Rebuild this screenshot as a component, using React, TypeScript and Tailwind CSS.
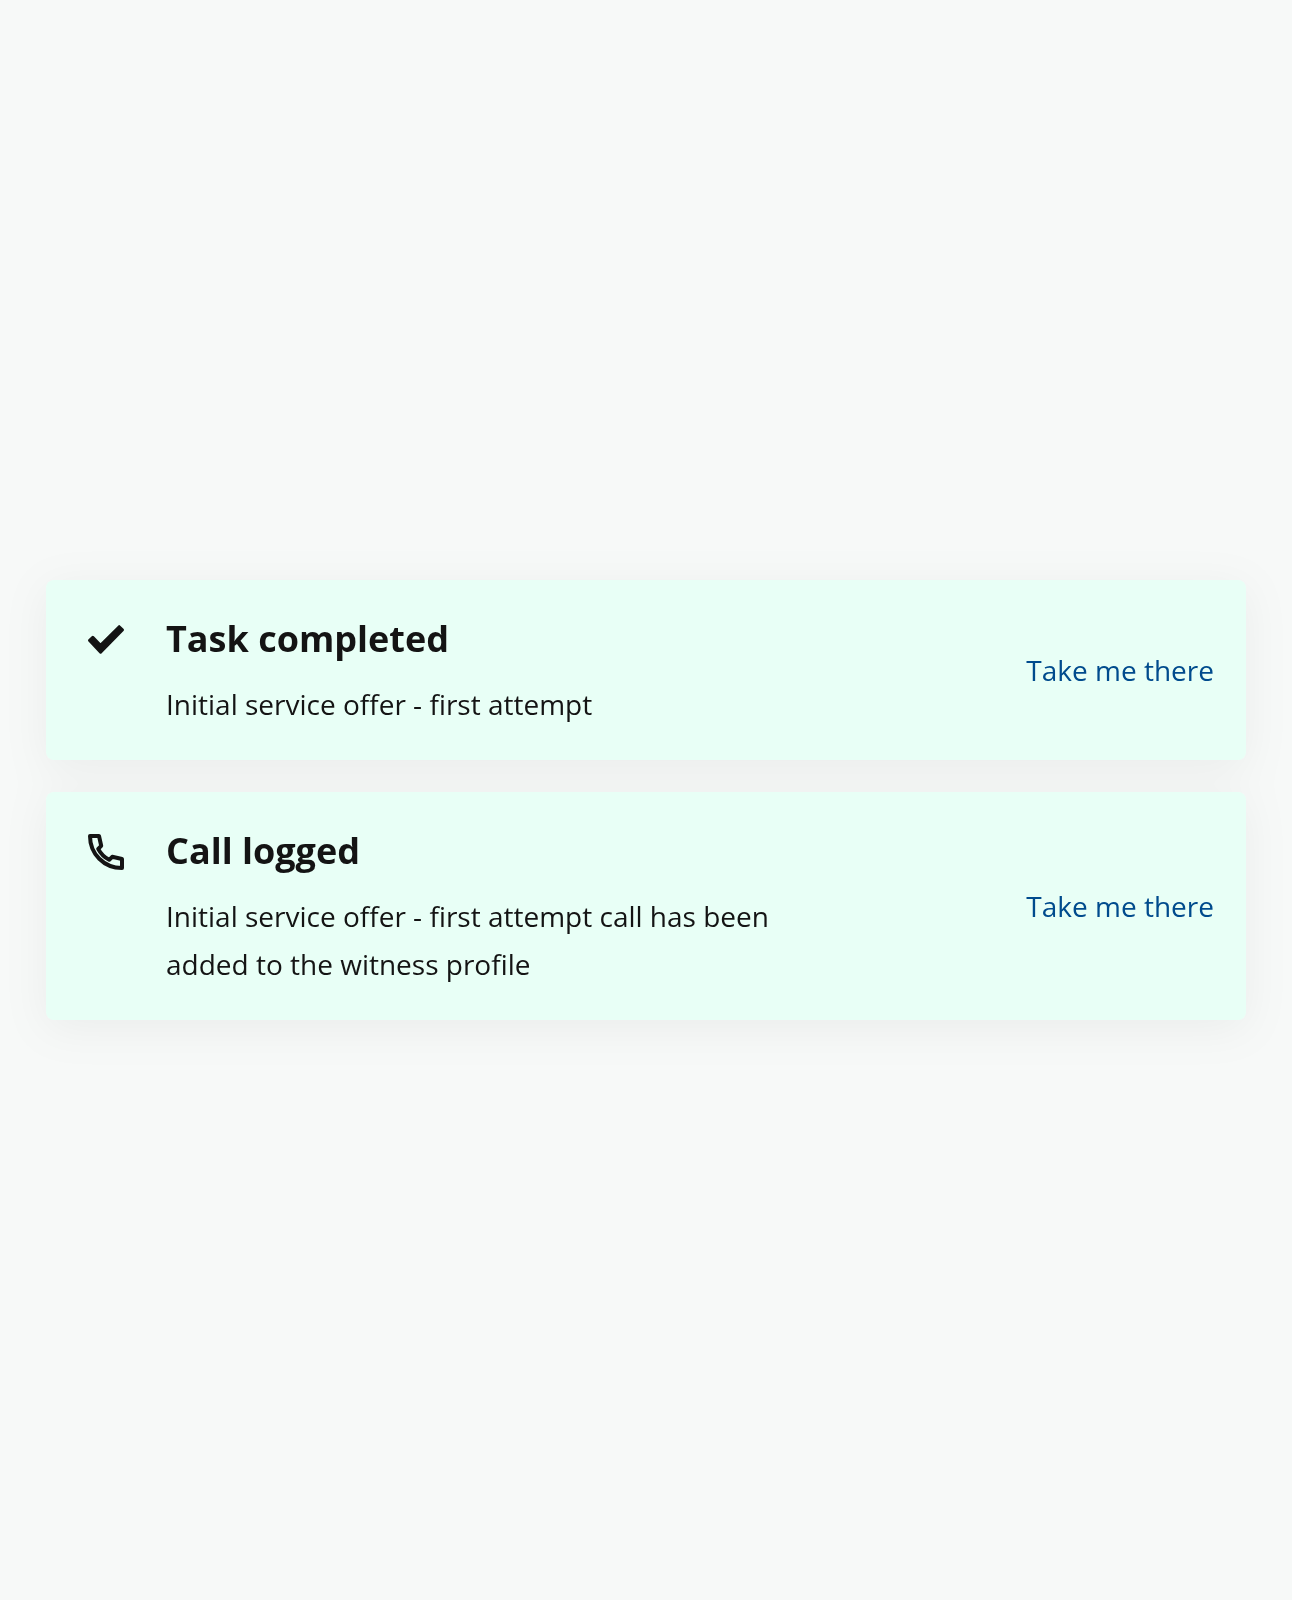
import type { ReactNode } from "react";

function CheckIcon() {
  return (
    <svg viewBox="0 0 36 36" className="size-9" fill="#141414" stroke="#141414" strokeWidth="3" strokeLinejoin="round" aria-hidden="true">
      <path d="M1.6 18.4 4.8 15.4 12.5 23.2 31.2 4.7 34.4 7.9 12.6 30.1Z" />
    </svg>
  );
}

function PhoneIcon() {
  return (
    <svg viewBox="0 0 36 36" className="size-9" fill="none" stroke="#141414" strokeWidth="4" strokeLinejoin="round" aria-hidden="true">
      <path d="M2 2H11L13.2 11.8L10.2 14.8C12.8 19.8 16.2 23.2 21.2 25.8L24.2 22.8L34 25V34C16 34 2 20 2 2Z" />
    </svg>
  );
}

type NoticeProps = {
  icon: ReactNode;
  title: string;
  message: string;
};

function Notice({ icon, title, message }: NoticeProps) {
  return (
    <li className="flex items-center justify-between gap-8 rounded-lg bg-[#e8fff6] p-8">
      <div className="flex flex-1 items-start gap-8">
        <div className="flex size-14 shrink-0 items-center justify-center">{icon}</div>
        <div className="max-w-[640px]">
          <h2 className="mb-3.5 text-[36px] leading-[54px] font-bold">{title}</h2>
          <p className="text-[28px] leading-[48px]">{message}</p>
        </div>
      </div>
      <a href="#" className="shrink-0 text-[28px] leading-[48px] text-[#004b8d]">
        Take me there
      </a>
    </li>
  );
}

export default function App() {
  return (
    <main className="flex min-h-screen flex-col justify-center bg-[#f7f9f8] px-[46px] font-['Open_Sans',sans-serif] text-[#141414]">
      <ul className="flex flex-col gap-8 drop-shadow-[0_8px_22px_rgba(0,0,0,0.05)]">
        <Notice icon={<CheckIcon />} title="Task completed" message="Initial service offer - first attempt" />
        <Notice
          icon={<PhoneIcon />}
          title="Call logged"
          message="Initial service offer - first attempt call has been added to the witness profile"
        />
      </ul>
    </main>
  );
}
